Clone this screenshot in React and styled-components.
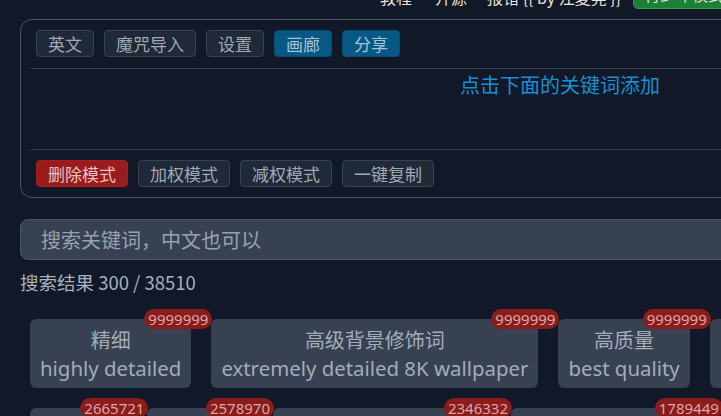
import styled, { createGlobalStyle, css } from "styled-components";

const GlobalStyle = createGlobalStyle`
  body {
    margin: 0;
    background: #111827;
    overflow: hidden;
    font-family: "Noto Sans", "Noto Sans CJK SC", sans-serif;
  }
`;

const Page = styled.div`
  width: 1080px;
  padding: 0 20px;
`;

const Nav = styled.nav`
  display: flex;
  align-items: center;
  height: 24px;
  margin-top: -15px;
  padding-left: 360px;
  font-family: "Noto Sans CJK SC", sans-serif;
  font-size: 16px;
  color: #e7e2d4;
`;

const NavLink = styled.span`
  margin-right: ${(p) => p.$space || 22}px;
  white-space: nowrap;
`;

const ModeBadge = styled.span`
  padding: 0 10px;
  height: 28px;
  line-height: 28px;
  margin-top: -6px;
  background: #1c7f3a;
  border: 1px solid #2e9a4e;
  border-radius: 5px;
  white-space: nowrap;
`;

const Panel = styled.section`
  margin-top: 10px;
  border: 1px solid #4b5563;
  border-radius: 12px;
  padding: 10px;
`;

const ButtonRow = styled.div`
  display: flex;
  gap: 10px;
  padding: 0 5px;
`;

const variants = {
  blue: css`
    background: #075985;
    border-color: #0c4a6e;
    color: #a9c3d6;
  `,
  red: css`
    background: #991b1b;
    border-color: #a51f1f;
    color: #e6c1c1;
  `,
};

const Button = styled.button`
  box-sizing: border-box;
  height: 27px;
  padding: 0 11px;
  font-family: "Noto Sans CJK SC", sans-serif;
  font-size: 17px;
  line-height: 25px;
  background: #1f2937;
  border: 1px solid #374151;
  border-radius: 4px;
  color: #a0a8b4;
  ${(p) => p.$variant && variants[p.$variant]}
`;

const Divider = styled.div`
  height: 1px;
  background: #374151;
  margin: ${(p) => (p.$top ? "11px 0 0" : "0 0 10px")};
`;

const DropArea = styled.div`
  height: 80px;
  padding-top: 2px;
  box-sizing: border-box;
  text-align: center;
  font-family: "Noto Sans CJK SC", sans-serif;
  font-size: 20px;
  line-height: 28px;
  color: #1a8fd4;
`;

const Search = styled.input`
  display: block;
  box-sizing: border-box;
  width: 100%;
  height: 41px;
  margin-top: 21px;
  padding: 0 20px;
  background: #374151;
  border: 1px solid #4b5563;
  border-radius: 8px;
  font-family: "Noto Sans CJK SC", sans-serif;
  font-size: 20px;
  color: #d1d5db;
  outline: none;
  &::placeholder {
    color: #97a1ad;
  }
`;

const ResultCount = styled.div`
  margin-top: 10px;
  font-family: "Noto Sans CJK SC", sans-serif;
  font-size: 18.5px;
  line-height: 24px;
  color: #a9b1bc;
`;

const CardGrid = styled.div`
  display: flex;
  flex-wrap: wrap;
  padding-top: 15px;
`;

const Card = styled.div`
  position: relative;
  margin: 10px;
  padding: 6px 10px 5px;
  background: #374151;
  border-radius: 6px;
  text-align: center;
  font-size: 20.4px;
  line-height: 29px;
  color: #a3acb9;
  white-space: nowrap;
`;

const Zh = styled.div`
  font-family: "Noto Sans CJK SC", sans-serif;
  font-size: 20px;
`;

const En = styled.div``;

const Count = styled.span`
  position: absolute;
  top: -10px;
  right: -21px;
  height: 20px;
  padding: 0 4px;
  border-radius: 10px;
  background: #8a1c1c;
  color: #dca7a7;
  font-size: 15px;
  line-height: 20px;
`;

const tags = [
  { zh: "精细", en: "highly detailed", n: 9999999 },
  { zh: "高级背景修饰词", en: "extremely detailed 8K wallpaper", n: 9999999 },
  { zh: "高质量", en: "best quality", n: 9999999 },
  { zh: "杰作", en: "masterpiece", n: 9999999 },
  { zh: "超精细", en: "ultra-detailed", n: 9999999 },
  { zh: "细致", en: "detailed", n: 2665721 },
  { zh: "美丽", en: "beautiful", n: 2578970 },
  { zh: "细节背景", en: "detailed background", n: 2346332 },
  { zh: "电影光效", en: "cinematic lighting", n: 1789449 },
  { zh: "插画", en: "illustration", n: 1652210 },
];

export default function App() {
  return (
    <Page>
      <GlobalStyle />
      <Nav>
        <NavLink $space={23}>教程</NavLink>
        <NavLink $space={20}>开源</NavLink>
        <NavLink $space={12}>报错 {"{{ by 江夏尧 }}"}</NavLink>
        <ModeBadge>青少年模式</ModeBadge>
      </Nav>

      <Panel>
        <ButtonRow>
          <Button>英文</Button>
          <Button>魔咒导入</Button>
          <Button>设置</Button>
          <Button $variant="blue">画廊</Button>
          <Button $variant="blue">分享</Button>
        </ButtonRow>
        <Divider $top />
        <DropArea>点击下面的关键词添加</DropArea>
        <Divider />
        <ButtonRow>
          <Button $variant="red">删除模式</Button>
          <Button>加权模式</Button>
          <Button>减权模式</Button>
          <Button>一键复制</Button>
        </ButtonRow>
      </Panel>

      <Search placeholder="搜索关键词，中文也可以" />
      <ResultCount>搜索结果 300 / 38510</ResultCount>

      <CardGrid>
        {tags.map((t) => (
          <Card key={t.en}>
            <Zh>{t.zh}</Zh>
            <En>{t.en}</En>
            <Count>{t.n}</Count>
          </Card>
        ))}
      </CardGrid>
    </Page>
  );
}
